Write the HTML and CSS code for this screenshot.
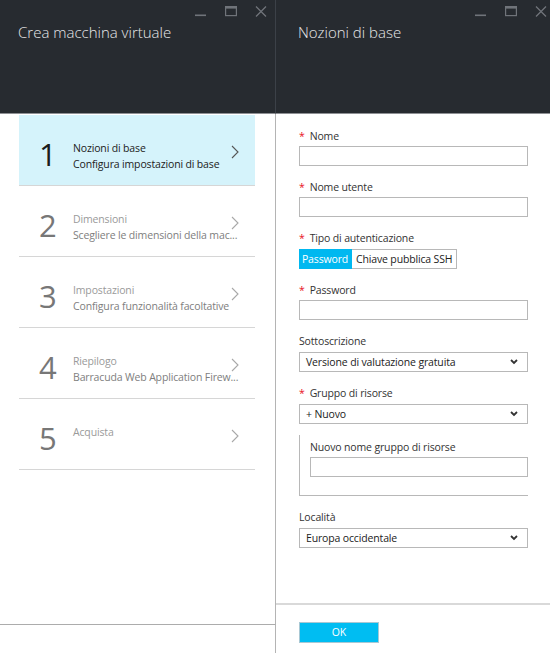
FILE: index.html
```html
<!DOCTYPE html>
<html lang="it">
<head>
<meta charset="utf-8">
<title>Crea macchina virtuale</title>
<link rel="stylesheet" href="styles.css">
</head>
<body>
<div class="app">
  <section class="blade blade-left">
    <header class="blade-head">
      <div class="controls">
        <svg class="ctl" viewBox="0 0 12 12" width="12" height="12"><rect x="0" y="9.5" width="11" height="1.6" fill="currentColor"/></svg>
        <svg class="ctl" viewBox="0 0 12 12" width="12" height="12"><rect x="0.6" y="1.6" width="10.8" height="9" fill="none" stroke="currentColor" stroke-width="1.2"/><rect x="0" y="1" width="12" height="2.6" fill="currentColor"/></svg>
        <svg class="ctl" viewBox="0 0 12 12" width="12" height="12"><path d="M1 1.5 L11 11.5 M11 1.5 L1 11.5" stroke="currentColor" stroke-width="1.3" fill="none"/></svg>
      </div>
      <h1 class="blade-title">Crea macchina virtuale</h1>
    </header>
    <div class="blade-body">
      <ul class="steps">
        <li class="step step-active">
          <span class="step-num">1</span>
          <div class="step-text">
            <div class="step-title">Nozioni di base</div>
            <div class="step-sub">Configura impostazioni di base</div>
          </div>
          <svg class="step-chev" viewBox="0 0 8 14" width="8" height="14"><path d="M1 1 L7 7 L1 13" fill="none" stroke="currentColor" stroke-width="1.1"/></svg>
        </li>
        <li class="step">
          <span class="step-num">2</span>
          <div class="step-text">
            <div class="step-title">Dimensioni</div>
            <div class="step-sub">Scegliere le dimensioni della mac...</div>
          </div>
          <svg class="step-chev" viewBox="0 0 8 14" width="8" height="14"><path d="M1 1 L7 7 L1 13" fill="none" stroke="currentColor" stroke-width="1.1"/></svg>
        </li>
        <li class="step">
          <span class="step-num">3</span>
          <div class="step-text">
            <div class="step-title">Impostazioni</div>
            <div class="step-sub">Configura funzionalità facoltative</div>
          </div>
          <svg class="step-chev" viewBox="0 0 8 14" width="8" height="14"><path d="M1 1 L7 7 L1 13" fill="none" stroke="currentColor" stroke-width="1.1"/></svg>
        </li>
        <li class="step">
          <span class="step-num">4</span>
          <div class="step-text">
            <div class="step-title">Riepilogo</div>
            <div class="step-sub">Barracuda Web Application Firew...</div>
          </div>
          <svg class="step-chev" viewBox="0 0 8 14" width="8" height="14"><path d="M1 1 L7 7 L1 13" fill="none" stroke="currentColor" stroke-width="1.1"/></svg>
        </li>
        <li class="step">
          <span class="step-num">5</span>
          <div class="step-text">
            <div class="step-title">Acquista</div>
          </div>
          <svg class="step-chev" viewBox="0 0 8 14" width="8" height="14"><path d="M1 1 L7 7 L1 13" fill="none" stroke="currentColor" stroke-width="1.1"/></svg>
        </li>
      </ul>
    </div>
    <footer class="blade-foot"></footer>
  </section>

  <section class="blade blade-right">
    <header class="blade-head">
      <div class="controls">
        <svg class="ctl" viewBox="0 0 12 12" width="12" height="12"><rect x="0" y="9.5" width="11" height="1.6" fill="currentColor"/></svg>
        <svg class="ctl" viewBox="0 0 12 12" width="12" height="12"><rect x="0.6" y="1.6" width="10.8" height="9" fill="none" stroke="currentColor" stroke-width="1.2"/><rect x="0" y="1" width="12" height="2.6" fill="currentColor"/></svg>
        <svg class="ctl" viewBox="0 0 12 12" width="12" height="12"><path d="M1 1.5 L11 11.5 M11 1.5 L1 11.5" stroke="currentColor" stroke-width="1.3" fill="none"/></svg>
      </div>
      <h1 class="blade-title">Nozioni di base</h1>
    </header>
    <div class="blade-body form">
      <div class="field">
        <label class="label"><span class="req">*</span>Nome</label>
        <div class="input"></div>
      </div>
      <div class="field">
        <label class="label"><span class="req">*</span>Nome utente</label>
        <div class="input"></div>
      </div>
      <div class="field">
        <label class="label label-toggle"><span class="req">*</span>Tipo di autenticazione</label>
        <div class="toggle">
          <span class="toggle-opt toggle-on">Password</span><span class="toggle-opt">Chiave pubblica SSH</span>
        </div>
      </div>
      <div class="field">
        <label class="label"><span class="req">*</span>Password</label>
        <div class="input"></div>
      </div>
      <div class="field">
        <label class="label label-sel">Sottoscrizione</label>
        <div class="select"><span>Versione di valutazione gratuita</span><svg class="sel-chev" viewBox="0 0 8 6" width="8" height="6"><path d="M1 1 L4 4 L7 1" fill="none" stroke="currentColor" stroke-width="1.8"/></svg></div>
      </div>
      <div class="field field-group">
        <label class="label label-sel"><span class="req">*</span>Gruppo di risorse</label>
        <div class="select"><span>+ Nuovo</span><svg class="sel-chev" viewBox="0 0 8 6" width="8" height="6"><path d="M1 1 L4 4 L7 1" fill="none" stroke="currentColor" stroke-width="1.8"/></svg></div>
      </div>
      <div class="subbox">
        <label class="label">Nuovo nome gruppo di risorse</label>
        <div class="input"></div>
      </div>
      <div class="field">
        <label class="label label-sel">Località</label>
        <div class="select"><span>Europa occidentale</span><svg class="sel-chev" viewBox="0 0 8 6" width="8" height="6"><path d="M1 1 L4 4 L7 1" fill="none" stroke="currentColor" stroke-width="1.8"/></svg></div>
      </div>
    </div>
    <footer class="blade-foot">
      <button class="ok">OK</button>
    </footer>
  </section>
</div>
</body>
</html>
```
FILE: styles.css
```css
* { box-sizing: border-box; }
html, body { margin: 0; padding: 0; }
body {
  width: 550px;
  height: 653px;
  overflow: hidden;
  background: #fff;
  font-family: "Open Sans", "Noto Sans", sans-serif;
  font-size: 10.5px;
  letter-spacing: -0.15px;
  color: #222;
}
.app {
  display: flex;
  height: 653px;
}
.blade {
  display: flex;
  flex-direction: column;
  height: 653px;
}
.blade-left { width: 276px; flex: none; }
.blade-right { flex: 1; min-width: 0; }

.blade-head {
  height: 114px;
  flex: none;
  background: #272b30;
  border-bottom: 1px solid #8e9094;
  display: flex;
  flex-direction: column;
}
.blade-left .blade-head { border-right: 1px solid #3c4148; }
.controls {
  height: 22px;
  display: flex;
  justify-content: flex-end;
  align-items: flex-start;
  padding-top: 5px;
  gap: 18px;
  color: #70747a;
}
.blade-left .controls { padding-right: 8px; }
.blade-right .controls { padding-right: 3px; }
.ctl { display: block; flex: none; }
.blade-title {
  margin: 0;
  font-weight: 300;
  font-size: 15px;
  letter-spacing: 0;
  line-height: 20px;
  color: #e6e7e8;
}
.blade-left .blade-title { padding-left: 18px; }
.blade-right .blade-title { padding-left: 22px; }

.blade-body { flex: 1; min-height: 0; }
.blade-left .blade-body { border-right: 1px solid #b4b4b4; }

.steps {
  list-style: none;
  margin: 0 0 0 19px;
  padding: 1px 0 0;
  width: 236px;
}
.step {
  height: 71px;
  border-bottom: 1px solid #d6d6d6;
  display: flex;
  align-items: flex-start;
}
.step-active { background: #d5f3fb; }
.step-num {
  width: 54px;
  padding-left: 20px;
  padding-top: 23px;
  font-size: 31px;
  font-weight: 400;
  letter-spacing: 0;
  line-height: 32px;
  color: #777;
  flex: none;
}
.step-active .step-num { color: #1b1b1b; }
.step-text {
  flex: 1;
  min-width: 0;
  padding-top: 25px;
  line-height: 16px;
  white-space: nowrap;
}
.step-title { color: #9a9a9a; }
.step-sub { color: #7e7e7e; }
.step-active .step-title,
.step-active .step-sub { color: #222; }
.step-chev {
  flex: none;
  margin-top: 30px;
  margin-right: 16px;
  color: #a8a8a8;
}
.step-active .step-chev { color: #555; }

.blade-left .blade-foot {
  height: 29px;
  flex: none;
  border-top: 1px solid #acacac;
  border-right: 1px solid #b4b4b4;
}

.form { padding: 14px 22px 0 23px; }
.field { margin-bottom: 13px; }
.label {
  display: block;
  line-height: 16px;
  margin-bottom: 2px;
  color: #333;
}
.label-toggle, .label-sel { margin-bottom: 3px; }
.req {
  color: #e81123;
  margin-right: 5px;
}
.input {
  height: 20px;
  width: 229px;
  border: 1px solid #b8b8b8;
  background: #fff;
}
.toggle {
  display: flex;
  height: 20px;
}
.toggle-opt {
  display: flex;
  align-items: center;
  height: 20px;
  padding: 0 4px;
  border: 1px solid #b8b8b8;
  border-left: none;
  line-height: 18px;
  color: #222;
}
.toggle-on {
  background: #00b8f0;
  border-color: #00b8f0;
  color: #fff;
  width: 53px;
  justify-content: center;
}
.select {
  height: 20px;
  width: 229px;
  border: 1px solid #b8b8b8;
  display: flex;
  align-items: center;
  justify-content: space-between;
  padding: 0 9px 0 6px;
  color: #222;
}
.sel-chev { color: #333; display: block; }
.field-group { margin-bottom: 11px; }
.subbox {
  width: 229px;
  border-left: 1px solid #b8b8b8;
  border-bottom: 1px solid #b8b8b8;
  padding: 4px 0 18px 10px;
  margin-bottom: 13px;
}
.subbox .input { width: 218px; }

.blade-right .blade-foot {
  height: 50px;
  flex: none;
  border-top: 2px solid #d9d9d9;
  padding: 17px 0 0 23px;
}
.ok {
  display: block;
  width: 80px;
  height: 21px;
  padding: 0;
  background: #00bdf2;
  border: 1px solid #a8c8d4;
  color: #fff;
  font-family: "Open Sans", "Noto Sans", sans-serif;
  font-size: 10.5px;
  line-height: 19px;
  text-align: center;
}
```
